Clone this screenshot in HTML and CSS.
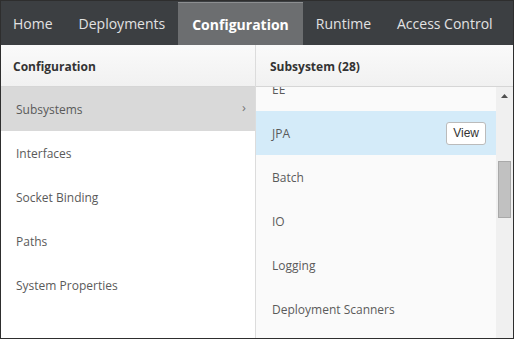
FILE: index.html
```html
<!DOCTYPE html>
<html lang="en">
    <head>
        <meta charset="UTF-8" />
        <meta name="viewport" content="width=device-width, initial-scale=1.0" />
        <title>Management Console</title>
        <link rel="stylesheet" href="styles.css">
    </head>
    <body>
        <div class="frame">
        <nav class="topnav">
            <a class="tab">Home</a>
            <a class="tab">Deployments</a>
            <a class="tab active">Configuration</a>
            <a class="tab">Runtime</a>
            <a class="tab">Access Control</a>
        </nav>
        <div class="columns">
            <section class="column column-left">
            <div class="column-header">Configuration</div>
            <ul class="item-list">
                <li class="item selected">Subsystems <span class="chevron">&rsaquo;</span></li>
                <li class="item">Interfaces</li>
                <li class="item">Socket Binding</li>
                <li class="item">Paths</li>
                <li class="item">System Properties</li>
            </ul>
            </section>
            <section class="column column-right">
            <div class="column-header">Subsystem (28)</div>
            <div class="scroll-area">
                <ul class="item-list scroll" id="subsystemList">
                    <li class="item">Datasources &amp; Drivers</li>
                    <li class="item">EJB</li>
                    <li class="item">JCA</li>
                    <li class="item">JMX</li>
                    <li class="item">Mail</li>
                    <li class="item">Naming</li>
                    <li class="item">EE</li>
                    <li class="item selected-blue">JPA <button class="btn-view">View</button></li>
                    <li class="item">Batch</li>
                    <li class="item">IO</li>
                    <li class="item">Logging</li>
                    <li class="item">Deployment Scanners</li>
                    <li class="item">Bean Validation</li>
                    <li class="item">Elytron</li>
                    <li class="item">Infinispan</li>
                    <li class="item">JGroups</li>
                    <li class="item">Messaging</li>
                    <li class="item">Remoting</li>
                    <li class="item">Request Controller</li>
                    <li class="item">Resource Adapters</li>
                    <li class="item">Security</li>
                    <li class="item">Security Manager</li>
                    <li class="item">Singleton</li>
                    <li class="item">Transactions</li>
                    <li class="item">Undertow</li>
                    <li class="item">Web Services</li>
                    <li class="item">Weld</li>
                    <li class="item">Threads</li>
                </ul>
                <div class="scrollbar" id="scrollbar">
                    <div class="scroll-btn">
                        <svg width="7" height="4" viewBox="0 0 7 4"><path d="M0 4L3.5 0L7 4z" fill="#505050"/></svg>
                    </div>
                    <div class="scroll-track">
                        <div class="scroll-thumb" id="scrollThumb"></div>
                    </div>
                    <div class="scroll-btn">
                        <svg width="7" height="4" viewBox="0 0 7 4"><path d="M0 0L3.5 4L7 0z" fill="#505050"/></svg>
                    </div>
                </div>
            </div>
            </section>
        </div>
        </div>

        <script>
        const list = document.getElementById("subsystemList");
        const thumb = document.getElementById("scrollThumb");

        // keep the subsystem list scrolled down to the EE / JPA area
        list.scrollTop = 284;

        function updateThumb() {
            const track = list.clientHeight - 34;
            const size = Math.round(track * list.clientHeight / list.scrollHeight);
            const maxScroll = list.scrollHeight - list.clientHeight;
            const top = Math.round((list.scrollTop / maxScroll) * (track - size));
            thumb.style.height = size + "px";
            thumb.style.marginTop = top + "px";
        }
        updateThumb();
        </script>
    </body>
</html>
```

FILE: styles.css
```css
* {
    box-sizing: border-box;
    font-family: "Open Sans", sans-serif;
}
body {
    margin: 0;
    padding: 0;
    overflow: hidden;
    background: #fff;
}
.frame {
    width: 514px;
    height: 339px;
    border: 1px solid #2e2e2e;
    overflow: hidden;
    background: #fff;
}
.topnav {
    display: flex;
    height: 44px;
    padding-top: 1px;
    background: #3c3f42;
}
.tab {
    display: flex;
    align-items: center;
    height: 43px;
    padding: 0 13px;
    font-size: 14px;
    color: #e2e2e2;
    cursor: pointer;
}
.tab:first-child {
    padding-left: 12px;
}
.tab.active {
    padding: 0 14px;
    background: #6c6e70;
    border-top: 1px solid #8c8e90;
    color: #fff;
    font-weight: 700;
}
.columns {
    display: flex;
}
.column-left {
    width: 255px;
    border-right: 1px solid #dcdcdc;
    background: #fff;
}
.column-right {
    flex: 1;
    min-width: 0;
    background: #fafafa;
}
.column-header {
    height: 42px;
    padding: 13px 12px 0;
    font-size: 12px;
    font-weight: 700;
    color: #333;
    background: linear-gradient(#fafafa, #f1f1f1);
    border-bottom: 1px solid #d6d6d6;
}
.column-right .column-header {
    padding-left: 14px;
}
.item-list {
    list-style: none;
    margin: 0;
    padding: 0;
}
.item {
    display: flex;
    align-items: center;
    justify-content: space-between;
    flex-shrink: 0;
    height: 44px;
    padding: 0 10px 0 15px;
    font-size: 12px;
    color: #5a5a5a;
}
.column-right .item {
    padding-left: 16px;
}
.item.selected {
    background: #d9d9d9;
}
.item.selected-blue {
    background: #d4ebf9;
}
.chevron {
    font-size: 13px;
    color: #777;
    margin-top: -4px;
    margin-right: -1px;
}
.btn-view {
    height: 23px;
    padding: 0 6px;
    font-family: "Liberation Sans", Arial, sans-serif;
    font-size: 12px;
    color: #333;
    background: #fff;
    border: 1px solid #bbb;
    border-radius: 3px;
}
.scroll-area {
    display: flex;
    height: 282px;
}
.scroll {
    flex: 1;
    min-width: 0;
    height: 100%;
    overflow: hidden;
}
.scrollbar {
    display: flex;
    flex-direction: column;
    width: 17px;
    height: 100%;
    background: #f0f0f0;
}
.scroll-btn {
    display: flex;
    align-items: center;
    justify-content: center;
    height: 17px;
    flex-shrink: 0;
}
.scroll-track {
    flex: 1;
}
.scroll-thumb {
    width: 13px;
    margin-left: 2px;
    background: #c1c1c1;
    border: 1px solid #a9a9a9;
}
```
